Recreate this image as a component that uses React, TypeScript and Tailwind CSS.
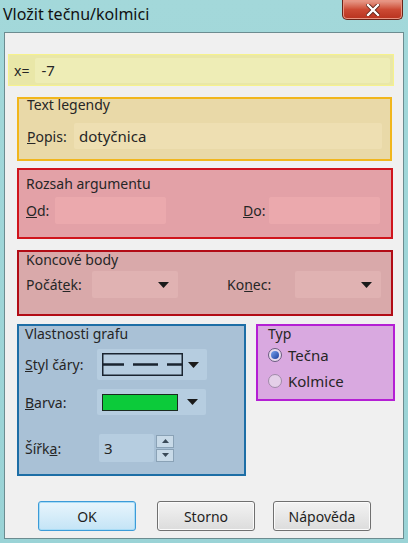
import type { ReactNode } from 'react'

const Caret = () => (
  <svg width="11" height="6" viewBox="0 0 11 6" className="shrink-0">
    <path d="M0 0 H11 L5.5 6 Z" fill="#1a1a1a" />
  </svg>
)

const Field = ({ className, children }: { className: string; children?: ReactNode }) => (
  <div className={`flex items-center rounded-[2px] ${className}`}>{children}</div>
)

const Button = ({ label, primary }: { label: string; primary?: boolean }) => (
  <button
    className={`w-[98px] h-[30px] rounded-[3px] border text-[14px] text-[#1e1e1e] ${
      primary
        ? 'border-[#3c9bd8] bg-gradient-to-b from-[#e8f5fc] to-[#c4e4f6] shadow-[inset_0_0_0_1px_#a8dcf6]'
        : 'border-[#707070] bg-gradient-to-b from-[#f3f3f3] to-[#dcdcdc] shadow-[inset_0_0_0_1px_#fbfbfb]'
    }`}
  >
    {label}
  </button>
)

export default function App() {
  return (
    <div
      className="w-[408px] h-[543px] flex flex-col bg-gradient-to-b from-[#a3d8da] to-[#9ad3d6] text-[#262626] overflow-hidden"
      style={{ fontFamily: '"Noto Sans", "Open Sans", sans-serif' }}
    >
      {/* title bar */}
      <div className="h-[32px] flex items-start justify-between shrink-0">
        <div className="pl-[3px] pt-[2px] text-[16px] text-[#111]">Vložit tečnu/kolmici</div>
        <div className="mr-[5px] w-[61px] h-[20px] rounded-b-[5px] border border-t-0 border-[#6a2418] bg-gradient-to-b from-[#e8a090] via-[#cc4a34] to-[#b8321e] flex items-center justify-center shadow-[inset_0_0_0_1px_#e99583]">
          <svg width="14" height="12" viewBox="0 0 14 12">
            <path d="M2 1 L12 11 M12 1 L2 11" stroke="#5a2016" strokeWidth="4" strokeLinecap="square" />
            <path d="M2 1 L12 11 M12 1 L2 11" stroke="#fff" strokeWidth="2.4" strokeLinecap="square" />
          </svg>
        </div>
      </div>

      {/* client area */}
      <div className="mx-[4px] mb-[4px] flex-1 border border-[#6c8c90] bg-[#f0f0f0] flex flex-col">
        {/* x= */}
        <div className="ml-[3px] mt-[21px] w-[386px] h-[32px] border border-[#f6f28c] bg-[#e9e7a8] flex items-center gap-[6px] pl-[5px] pr-[3px]">
          <span className="text-[14px]">x=</span>
          <Field className="flex-1 h-[25px] bg-[#eeedb6] pl-[6px] text-[15px]">-7</Field>
        </div>

        {/* Text legendy */}
        <div className="ml-[12px] mt-[11px] w-[375px] h-[64px] border-2 border-[#f1b61c] bg-[#e9d9a8] px-[8px]">
          <div className="text-[14px] leading-[18px] -mt-[3px]">Text legendy</div>
          <div className="flex items-center mt-[9px]">
            <span className="w-[47px] text-[14px]">
              <u>P</u>opis:
            </span>
            <Field className="w-[308px] h-[26px] bg-[#eedfb2] pl-[5px] text-[15px]">dotyčnica</Field>
          </div>
        </div>

        {/* Rozsah argumentu */}
        <div className="ml-[12px] mt-[7px] w-[376px] h-[71px] border-2 border-[#d0141c] bg-[#e3a1a7] px-[5px] pt-[5px]">
          <div className="text-[14px] leading-[18px] pl-[2px]">Rozsah argumentu</div>
          <div className="flex items-center mt-[4px]">
            <span className="w-[31px] text-[14px] pl-[2px]">
              <u>O</u>d:
            </span>
            <Field className="w-[111px] h-[27px] bg-[#eba9ad]" />
            <span className="ml-[77px] w-[26px] text-[14px]">
              <u>D</u>o:
            </span>
            <Field className="w-[111px] h-[27px] bg-[#eba9ad]" />
          </div>
        </div>

        {/* Koncové body */}
        <div className="ml-[12px] mt-[11px] w-[376px] h-[66px] border-2 border-[#b20c16] bg-[#d9a9aa] px-[5px]">
          <div className="text-[14px] leading-[18px] pl-[2px] -mt-[1px]">Koncové body</div>
          <div className="flex items-center mt-[2px]">
            <span className="w-[68px] text-[14px] pl-[2px]">
              Počát<u>e</u>k:
            </span>
            <Field className="w-[86px] h-[27px] bg-[#e0b2b2] justify-end pr-[9px]">
              <Caret />
            </Field>
            <span className="ml-[49px] w-[68px] text-[14px]">
              Ko<u>n</u>ec:
            </span>
            <Field className="w-[86px] h-[27px] bg-[#e0b2b2] justify-end pr-[9px]">
              <Caret />
            </Field>
          </div>
        </div>

        {/* bottom groups */}
        <div className="ml-[12px] mt-[8px] flex items-start gap-[10px]">
          <div className="w-[229px] h-[152px] border-2 border-[#1d6ea6] bg-[#a9c1d6] px-[5px]">
            <div className="text-[14px] leading-[18px] pl-[1px] -mt-[1px]">Vlastnosti grafu</div>
            <div className="flex items-center mt-[6px]">
              <span className="w-[73px] text-[14px] pl-[1px]">
                <u>S</u>tyl čáry:
              </span>
              <Field className="w-[110px] h-[31px] bg-[#b6cde0] pl-[5px] pr-[8px] justify-between">
                <svg width="81" height="23" viewBox="0 0 81 23">
                  <rect x="0.75" y="0.75" width="79.5" height="21.5" fill="none" stroke="#1a2430" strokeWidth="1.5" />
                  <path d="M1 11.5 H22 M31 11.5 H56 M65 11.5 H80" stroke="#1a2430" strokeWidth="2.5" />
                </svg>
                <Caret />
              </Field>
            </div>
            <div className="flex items-center mt-[9px]">
              <span className="w-[73px] text-[14px] pl-[1px]">
                <u>B</u>arva:
              </span>
              <Field className="w-[109px] h-[26px] bg-[#b6cde0] pl-[5px] pr-[8px] justify-between">
                <div className="w-[76px] h-[17px] bg-[#0ccb3a] border border-[#1a2a20]" />
                <Caret />
              </Field>
            </div>
            <div className="flex items-center mt-[19px]">
              <span className="w-[75px] text-[14px] pl-[1px]">
                Šířk<u>a</u>:
              </span>
              <Field className="w-[55px] h-[28px] bg-[#b6cde0] pl-[5px] text-[15px]">3</Field>
              <div className="ml-[2px] flex flex-col gap-[1px]">
                <div className="w-[18px] h-[13px] border border-[#8aa2b6] bg-[#c8dae8] flex items-center justify-center">
                  <svg width="7" height="4" viewBox="0 0 7 4">
                    <path d="M0 4 H7 L3.5 0 Z" fill="#3a4a58" />
                  </svg>
                </div>
                <div className="w-[18px] h-[13px] border border-[#8aa2b6] bg-[#c8dae8] flex items-center justify-center">
                  <svg width="7" height="4" viewBox="0 0 7 4">
                    <path d="M0 0 H7 L3.5 4 Z" fill="#3a4a58" />
                  </svg>
                </div>
              </div>
            </div>
          </div>

          <div className="w-[139px] h-[77px] border-2 border-[#b41fd4] bg-[#d9a9e0] pl-[10px]">
            <div className="text-[14px] leading-[18px] -mt-[1px]">Typ</div>
            <div className="flex items-center gap-[6px] mt-[1px] leading-[22px]">
              <div className="w-[14px] h-[14px] rounded-full border border-[#6a5a80] bg-[#e8dcee] flex items-center justify-center">
                <div className="w-[8px] h-[8px] rounded-full bg-gradient-to-br from-[#7aa4f0] to-[#1c3e9c]" />
              </div>
              <span className="text-[15px]">Tečna</span>
            </div>
            <div className="flex items-center gap-[6px] mt-[4px] leading-[22px]">
              <div className="w-[14px] h-[14px] rounded-full border border-[#a08aa8] bg-[#e4cfe8]" />
              <span className="text-[15px]">Kolmice</span>
            </div>
          </div>
        </div>

        {/* buttons */}
        <div className="ml-[33px] mt-[25px] flex gap-[21px]">
          <Button label="OK" primary />
          <Button label="Storno" />
          <div className="-ml-[3px]">
            <Button label="Nápověda" />
          </div>
        </div>
      </div>
    </div>
  )
}
